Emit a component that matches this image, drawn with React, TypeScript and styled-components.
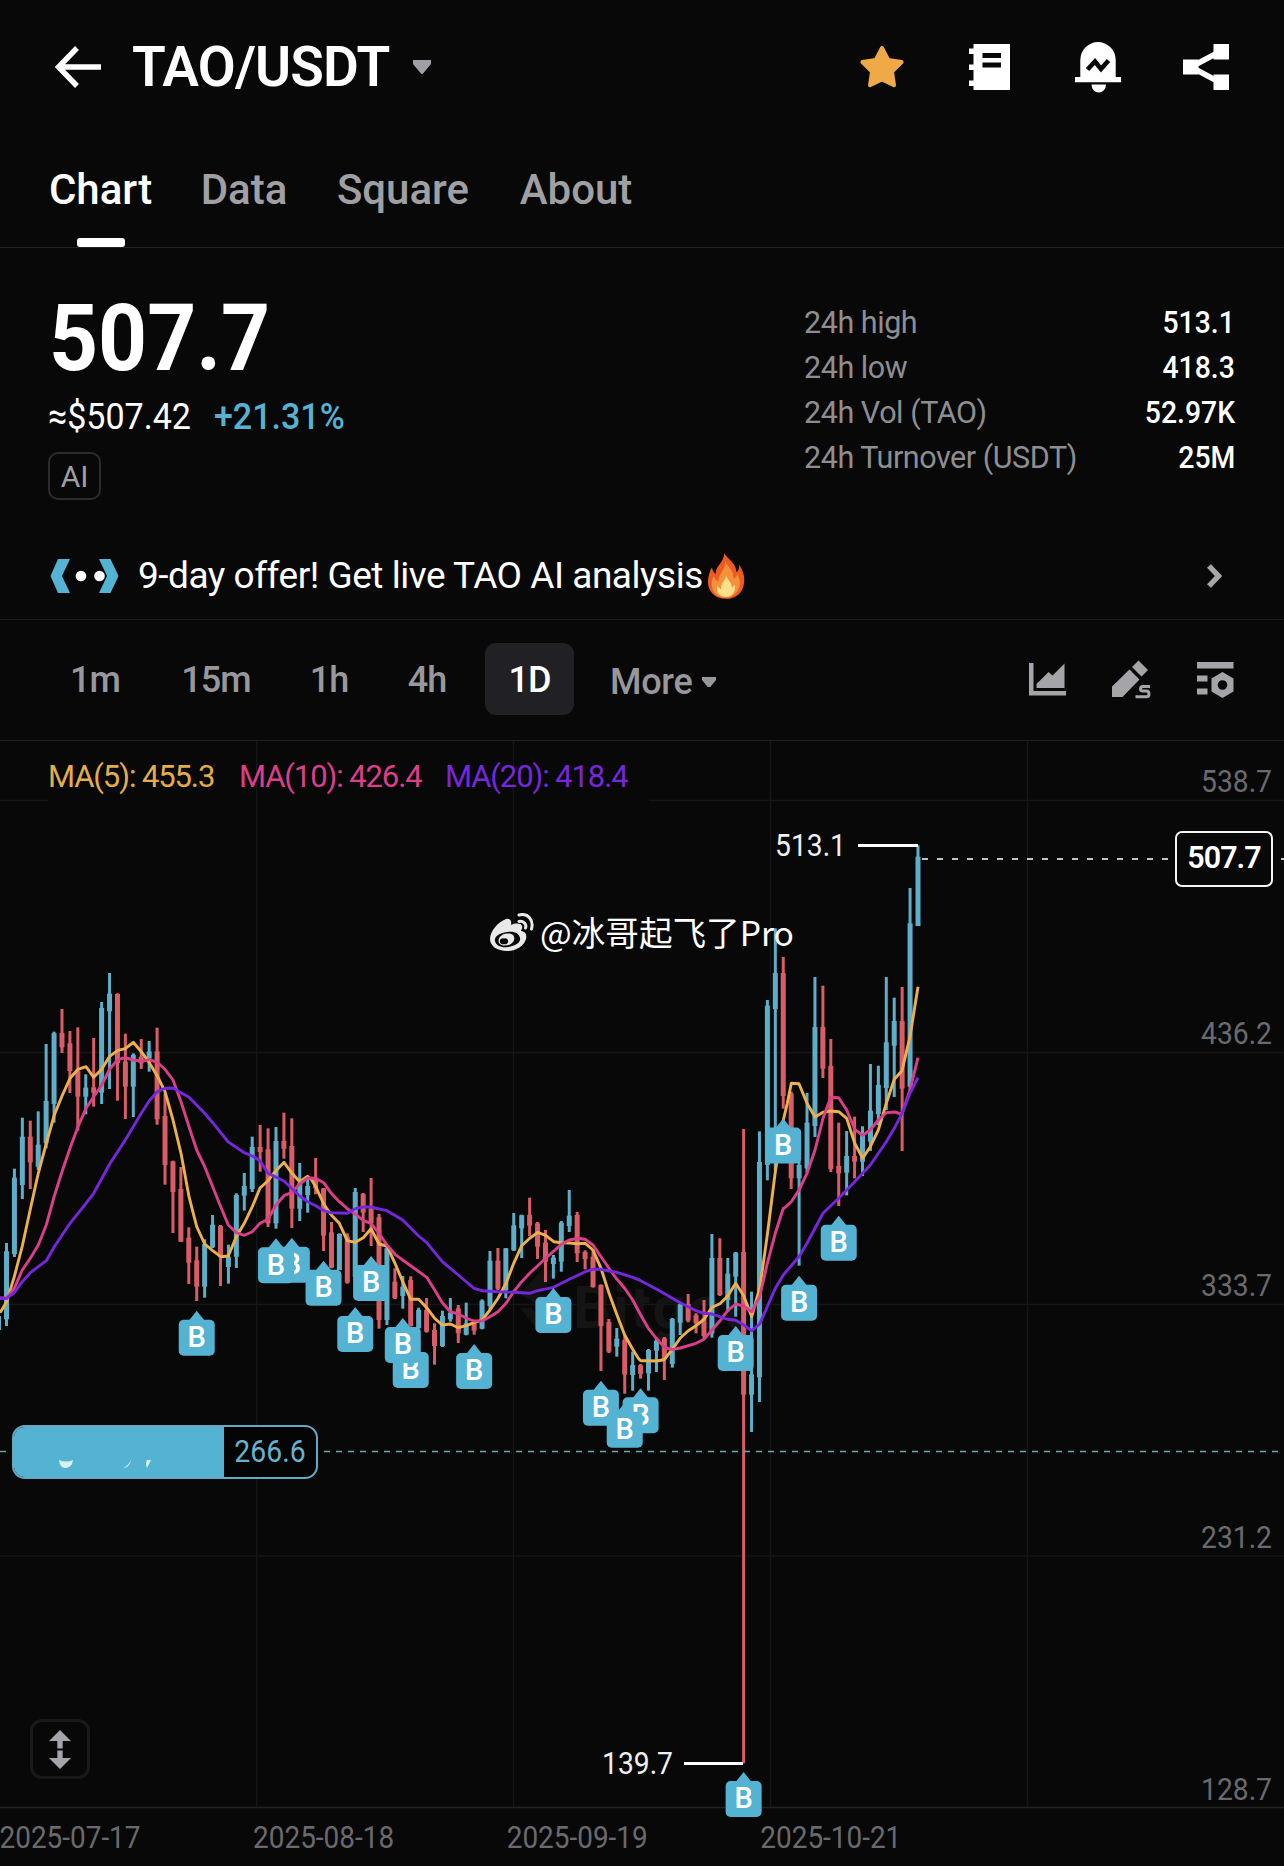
import React from "react";
import styled, { createGlobalStyle } from "styled-components";

const Global = createGlobalStyle`
  * { box-sizing: border-box; }
  html, body { margin: 0; background: #080808; }
  svg { display: block; flex: none; }
`;

const blue = "#54b3d3";
const muted = "#a0a0a4";

const Screen = styled.main`
  width: 1284px;
  height: 1866px;
  overflow: hidden;
  display: flex;
  flex-direction: column;
  background: #080808;
  color: #fff;
  font-family: Roboto, "Noto Sans CJK SC", sans-serif;
`;

const TopBar = styled.header`
  height: 134px;
  flex: none;
  display: flex;
  align-items: center;
  padding: 0 55px 0 55px;
`;
const Pair = styled.h1`
  margin: 0 24px 0 30px;
  width: 257px;
  font-size: 55px;
  line-height: 66px;
  font-weight: 600;
  letter-spacing: -0.8px;
  white-space: nowrap;
`;
const TopActions = styled.div`
  margin-left: auto;
  display: flex;
  align-items: center;
`;
const Action = styled.span<{ $gap?: number }>`
  margin-left: ${(p) => p.$gap ?? 0}px;
`;

const Tabs = styled.nav`
  height: 114px;
  flex: none;
  display: flex;
  padding-left: 49px;
  border-bottom: 1px solid #222224;
`;
const Tab = styled.a<{ $active?: boolean; $width: number; $gap?: number }>`
  width: ${(p) => p.$width}px;
  margin-right: ${(p) => p.$gap ?? 0}px;
  display: flex;
  flex-direction: column;
  align-items: center;
  justify-content: space-between;
  padding-top: 31px;
  font-size: 42px;
  line-height: 50px;
  font-weight: 500;
  white-space: nowrap;
  color: ${(p) => (p.$active ? "#fff" : muted)};
`;
const Underline = styled.span`
  width: 48px;
  height: 9px;
  border-radius: 3px;
  background: #fff;
`;

const Summary = styled.section`
  height: 300px;
  flex: none;
  display: flex;
  justify-content: space-between;
  padding: 0 49px 0 48px;
`;
const PriceColumn = styled.div`
  display: flex;
  flex-direction: column;
  align-items: flex-start;
`;
const Price = styled.div`
  margin-top: 40px;
  height: 107px;
  line-height: 102px;
  font-size: 93px;
  font-weight: 700;
  margin-left: 1px;
  transform: scaleX(0.92);
  transform-origin: left;
`;
const SubPrice = styled.div`
  display: flex;
  height: 44px;
  line-height: 44px;
  font-size: 37px;
  transform: scaleX(0.92);
  transform-origin: left;
`;
const Change = styled.span`
  margin-left: 25px;
  font-weight: 500;
  color: ${blue};
`;
const Tag = styled.span`
  margin-top: 13px;
  width: 53px;
  height: 48px;
  display: flex;
  align-items: center;
  justify-content: center;
  border: 2px solid #2c2c30;
  border-radius: 10px;
  font-size: 30px;
  color: ${muted};
`;
const Stats = styled.dl`
  margin: 52px 0 0;
  width: 431px;
  height: 181px;
  display: grid;
  grid-template-rows: repeat(4, 45px);
`;
const Stat = styled.div`
  display: flex;
  align-items: center;
  justify-content: space-between;
  font-size: 30.5px;
  dt { color: #8e8e92; letter-spacing: -0.45px; }
  dd { margin: 0; font-weight: 500; transform: scaleX(0.93); transform-origin: right; }
`;

const Offer = styled.section`
  height: 72px;
  flex: none;
  display: flex;
  align-items: center;
  padding: 0 62px 16px 50px;
  border-bottom: 1px solid #1c1c1e;
`;
const OfferText = styled.span`
  margin: 0 5px 0 19px;
  width: 564px;
  font-size: 37px;
  line-height: 54px;
  letter-spacing: -0.48px;
  white-space: nowrap;
`;
const Trailing = styled.span`
  margin-left: auto;
`;

const Intervals = styled.nav`
  height: 121px;
  flex: none;
  display: flex;
  align-items: center;
  padding: 0 50px 2px 49px;
  border-bottom: 1px solid #222224;
`;
const Interval = styled.button<{ $active?: boolean; $width: number; $gap?: number }>`
  width: ${(p) => p.$width}px;
  margin-left: ${(p) => p.$gap ?? 0}px;
  height: 72px;
  padding: 2px 0 0;
  border: 0;
  border-radius: 11px;
  font: 500 36px Roboto, sans-serif;
  letter-spacing: -0.9px;
  white-space: nowrap;
  background: ${(p) => (p.$active ? "#202025" : "transparent")};
  color: ${(p) => (p.$active ? "#fff" : "#98989c")};
`;
const More = styled.span`
  display: flex;
  align-items: center;
  gap: 10px;
  margin: 6px 0 0 36px;
  font-size: 36px;
  font-weight: 500;
  letter-spacing: -0.3px;
  color: #98989c;
`;
const Tools = styled.div`
  margin-left: auto;
  padding-top: 1px;
  display: flex;
  align-items: center;
  gap: 46px;
`;

const ChartPane = styled.section`
  position: relative;
  height: 1125px;
  flex: none;
  overflow: hidden;
`;
const Legend = styled.div`
  position: absolute;
  top: 18px;
  left: 48px;
  display: flex;
  gap: 23px;
  font-size: 31px;
  line-height: 36px;
`;
const LegendItem = styled.span<{ $color: string; $width: number }>`
  width: ${(p) => p.$width}px;
  letter-spacing: -1.1px;
  white-space: nowrap;
  color: ${(p) => p.$color};
`;
const CostTag = styled.div`
  position: absolute;
  left: 12px;
  top: 684px;
  width: 306px;
  height: 54px;
  display: flex;
  border: 2px solid #64aac4;
  border-radius: 13px;
  overflow: hidden;
  background: #050505;
`;
const CostLabel = styled.div`
  width: 211px;
  margin: -1px 0 -1px -1px;
  background: ${blue};
`;
const CostValue = styled.div`
  flex: 1;
  text-align: center;
  font-size: 30.5px;
  line-height: 50px;
  transform: scaleX(0.93);
  color: #68b2ce;
`;
const CurrentPrice = styled.div`
  position: absolute;
  left: 1175px;
  top: 90px;
  width: 98px;
  height: 56px;
  border: 2px solid #f4f4f4;
  border-radius: 7px;
  background: #080808;
  text-align: center;
  font-size: 30.5px;
  font-weight: 600;
  line-height: 50px;
  letter-spacing: -1px;
`;
const ScaleButton = styled.button`
  position: absolute;
  left: 30px;
  top: 978px;
  width: 60px;
  height: 60px;
  padding: 0;
  display: flex;
  align-items: center;
  justify-content: center;
  border: 3px solid #19191b;
  border-radius: 12px;
  background: transparent;
`;
const Author = styled.div`
  position: absolute;
  left: 490px;
  top: 166px;
  display: flex;
  align-items: center;
  gap: 6px;
  font: 400 33.6px/50px "Noto Sans CJK SC", sans-serif;
  white-space: nowrap;
`;
const AuthorName = styled.span`
  height: 50px;
`;

/* Bars are [direction, high, body top, body bottom, low] in steps of a third
   of a pixel, measured from the top of their own segment. */
type Bar = [string, number, number, number, number];
type Segment = { top: number; bars: Bar[] };
const segments: Segment[] = [
  {
    top: 940,
    bars: [
      ["u", 909, 934, 1138, 1158], ["u", 686, 713, 942, 951], ["u", 533, 590, 735, 777],
      ["d", 542, 590, 667, 747], ["u", 514, 614, 680, 690], ["u", 312, 483, 610, 625],
      ["u", 275, 280, 492, 548], ["d", 207, 279, 322, 339], ["d", 273, 310, 393, 459],
      ["d", 262, 393, 470, 572], ["u", 403, 443, 470, 523], ["d", 294, 442, 458, 500],
      ["u", 186, 204, 458, 492], ["u", 99, 161, 214, 447], ["d", 160, 162, 370, 482],
      ["d", 281, 365, 440, 537], ["u", 340, 345, 440, 531], ["d", 297, 350, 370, 387],
      ["u", 303, 334, 355, 395], ["d", 263, 334, 538, 554], ["d", 460, 528, 675, 734],
      ["d", 662, 664, 756, 879], ["d", 681, 747, 905, 906], ["d", 862, 893, 968, 1032],
      ["d", 920, 961, 1040, 1083], ["u", 898, 912, 1040, 1073], ["u", 825, 854, 922, 924],
      ["d", 855, 858, 952, 1038], ["u", 914, 950, 981, 1031], ["u", 760, 765, 950, 984],
      ["u", 699, 738, 767, 812], ["u", 590, 621, 747, 756], ["d", 555, 621, 636, 695],
      ["d", 565, 628, 850, 861], ["u", 561, 603, 850, 866], ["d", 518, 603, 626, 656],
      ["d", 535, 618, 806, 864], ["u", 669, 728, 806, 843], ["u", 715, 738, 765, 818],
      ["d", 654, 715, 745, 763], ["d", 744, 745, 887, 933], ["d", 846, 877, 983, 985],
      ["u", 880, 882, 990, 990], ["d", 880, 890, 1028, 1031], ["u", 744, 756, 1010, 1010],
      ["d", 759, 762, 818, 876], ["d", 714, 805, 850, 918], ["d", 822, 832, 1140, 1166],
      ["u", 920, 925, 1140, 1155], ["d", 985, 1025, 1075, 1077], ["u", 1008, 1040, 1068, 1106],
      ["d", 1009, 1020, 1158, 1160], ["u", 1103, 1110, 1165, 1165], ["d", 1074, 1110, 1175, 1178],
      ["d", 1150, 1170, 1218, 1274], ["u", 1112, 1128, 1218, 1221], ["u", 1074, 1118, 1138, 1145],
      ["d", 1095, 1105, 1180, 1209], ["u", 1088, 1150, 1184, 1186], ["d", 1140, 1150, 1172, 1184],
      ["u", 1078, 1082, 1166, 1168], ["u", 933, 962, 1098, 1110], ["d", 924, 962, 1046, 1050],
      ["u", 924, 925, 1050, 1075], ["u", 819, 856, 931, 933], ["u", 824, 826, 865, 954],
      ["d", 773, 825, 857, 888], ["d", 846, 850, 920, 957], ["d", 870, 908, 965, 1026],
      ["u", 945, 953, 972, 1016], ["u", 843, 848, 965, 995], ["u", 750, 827, 858, 876],
      ["d", 816, 825, 940, 966], ["d", 931, 936, 957, 988], ["d", 930, 950, 1041, 1043],
      ["d", 1033, 1035, 1158, 1293], ["d", 1137, 1146, 1235, 1239], ["u", 1164, 1196, 1220, 1250],
      ["d", 1185, 1200, 1304, 1361], ["u", 1235, 1275, 1305, 1352],
    ],
  },
  {
    top: 1100,
    bars: [
      ["d", 792, 796, 822, 836], ["u", 747, 750, 820, 872], ["u", 713, 722, 752, 816],
      ["d", 711, 715, 778, 840], ["u", 654, 657, 792, 803], ["u", 610, 613, 668, 705],
      ["d", 582, 612, 662, 667], ["d", 640, 646, 670, 700], ["d", 600, 655, 708, 715],
      ["u", 402, 474, 700, 713], ["d", 415, 474, 585, 588], ["u", 474, 521, 600, 635],
      ["u", 456, 458, 530, 650], ["d", 87, 456, 884, 1990], ["u", 575, 823, 884, 996],
      ["u", 94, 186, 832, 906],
    ],
  },
  {
    top: 820,
    bars: [
      ["u", 540, 557, 1035, 1081], ["u", 325, 459, 567, 1053], ["d", 411, 459, 828, 866],
      ["d", 815, 820, 1075, 1107], ["u", 980, 1035, 1075, 1337], ["u", 819, 908, 1045, 1058],
      ["u", 471, 621, 918, 951], ["d", 497, 621, 746, 774], ["d", 657, 738, 1047, 1056],
      ["d", 908, 1038, 1060, 1158], ["u", 933, 1008, 1058, 1126], ["d", 890, 1008, 1025, 1075],
      ["u", 919, 940, 1025, 1068], ["u", 732, 872, 965, 993], ["u", 737, 795, 882, 915],
      ["u", 471, 667, 804, 870], ["u", 533, 603, 677, 831], ["d", 501, 603, 806, 993],
      ["u", 204, 310, 800, 810], ["u", 76, 110, 318, 318],
    ],
  },
];
const barX = (i: number) => 6.5 + i * 7.926;
const candles = segments
  .flatMap((s) => s.bars.map(([dir, ...v]) => ({ dir, v: v.map((n) => s.top + n / 3) })))
  .map((c, i) => ({ ...c, x: barX(i) }));

/* Average curves use the same third-pixel steps; every piece has its own origin. */
const origins = [[0, 940], [310, 940], [560, 1100], [640, 820]];
const curve = (pieces: string[]) =>
  pieces
    .flatMap((piece, k) =>
      piece.split(" ").map((pt) => {
        const [x, y] = pt.split(",").map(Number);
        return `${(origins[k][0] + x / 3).toFixed(1)},${(origins[k][1] + y / 3).toFixed(1)}`;
      })
    )
    .join(" ");

const ma5 = curve([
  "0,1118 20,1085 43,1010 67,918 91,808 115,700 139,610 163,525 186,468 210,415 234,388 258,380 281,412 305,388 329,349 353,331 376,326 400,307 424,335 448,368 472,408 495,455 519,540 543,640 567,770 590,860 614,912 638,932 662,950 685,948 709,890 733,850 757,800 780,744 804,722 828,692 852,667 876,700 899,725 923,709",
  "5,720 17,740 41,792 64,825 88,850 112,902 136,907 160,893 183,866 207,912 231,918 255,970 278,1025 302,1078 326,1078 350,1103 374,1135 397,1155 421,1152 445,1163 469,1157 492,1148 516,1140 540,1110 564,1075 588,1030 611,970 635,917 659,895 683,877 707,886 731,905 754,908 778,909 802,911 826,910 849,930 873,985 897,1060 921,1125 944,1185 968,1228 985,1255",
  "242,782 265,782 289,783 313,779 337,748 361,714 385,692 408,677 432,658 456,622 480,611 503,588 527,550 551,587 575,650 600,560 622,405 646,215 670,60",
  "430,900 442,850 454,790 477,791 501,850 525,891 549,877 572,873 596,875 620,895 644,970 668,1015 691,980 715,930 739,850 763,778 786,752 810,650 834,500",
]);
const ma10 = curve([
  "0,1074 20,1074 43,1045 67,990 91,955 115,915 139,855 163,768 186,695 210,625 234,560 258,505 281,470 305,435 329,387 353,359 376,353 400,360 424,364 448,359 472,367 495,388 519,420 543,485 567,560 590,630 614,680 638,740 662,800 685,855 709,878 733,886 757,875 780,850 804,838 828,795 852,767 876,757 899,732 923,714",
  "17,715 41,728 64,760 88,785 112,806 136,822 160,842 183,850 207,880 231,915 255,943 278,960 302,977 350,1012 374,1050 397,1088 421,1115 445,1122 469,1135 492,1143 516,1143 540,1130 564,1115 588,1090 611,1055 635,1025 659,1000 707,955 754,913 778,900 802,895 826,898 849,915 873,950 897,985 921,1018",
  "194,565 218,600 242,645 265,685 289,715 313,742 337,749 361,744 408,730 432,718 456,690 480,662 503,632 527,612 551,618 575,635 599,590 622,490 646,400 670,325",
  "430,1167 454,1145 477,1110 501,1060 525,990 549,895 572,832 596,833 620,870 644,928 668,946 691,930 715,900 739,878 763,876 786,882 810,810 834,713",
]);
const ma20 = curve([
  "0,1076 20,1075 43,1058 67,1025 91,998 115,980 139,962 163,920 210,850 258,790 281,760 329,672 376,600 424,520 448,482 472,455 495,445 519,444 543,458 567,472 614,520 638,548 685,606 733,638 757,648 780,662 804,700 852,723 899,768 923,785",
  "17,797 41,812 64,818 112,820 136,806 160,801 183,801 207,807 231,812 278,840 326,888 350,908 397,965 445,1005 492,1045 516,1052 564,1055 611,1057 659,1060 683,1052 731,1042 778,1018 826,995 849,988 873,988 897,993 921,997 968,1012",
  "242,542 289,567 361,608 408,632 432,640 456,642 503,658 527,661 551,675 575,692 599,672 622,620 646,565 670,525",
  "430,1365 477,1310 501,1270 549,1180 596,1135 644,1085 691,1035 739,965 763,925 786,880 810,820 834,773",
]);

const buys: [number, number][] = [
  [24, 1310.7], [36, 1237.7], [34, 1238.3], [40, 1260.7], [44, 1307], [46, 1256],
  [51, 1343], [50, 1318], [59, 1344], [69, 1288], [75, 1380.7], [80, 1388.3],
  [78, 1402.7], [92, 1326], [98, 1118.5], [100, 1275.7], [105, 1215.7], [93, 1772],
];

const priceLabels = ["538.7", "436.2", "333.7", "231.2", "128.7"];
const dateLabels = ["2025-07-17", "2025-08-18", "2025-09-19", "2025-10-21"];

const AxisText = styled.text`
  font: 400 30.5px Roboto, sans-serif;
  fill: #6a6a6e;
`;
const PeakText = styled.text`
  font: 400 30.5px Roboto, sans-serif;
  fill: #f0f0f0;
`;
const BuyText = styled.text`
  font: 500 29px Roboto, sans-serif;
  fill: #fff;
  text-anchor: middle;
`;
const BrandText = styled.text`
  font: 700 60px Roboto, sans-serif;
  fill: #141415;
`;

function PriceChart() {
  return (
    <svg width="1284" height="1125" viewBox="0 741 1284 1125">
      <g stroke="#161618" strokeWidth="1.4">
        {[256.7, 513.5, 770.5, 1027.5].map((x) => (
          <line key={x} x1={x} x2={x} y1="741" y2="1807" />
        ))}
        <line x1="0" x2="48" y1="800.5" y2="800.5" />
        <line x1="649" x2="1284" y1="800.5" y2="800.5" />
        {[1052.5, 1304.5, 1556].map((y) => (
          <line key={y} x1="0" x2="1284" y1={y} y2={y} />
        ))}
        <line x1="0" x2="1284" y1="1807.5" y2="1807.5" stroke="#222224" />
      </g>
      <path d="M520 1294 L542 1270 H560 L540 1294 H552 L540 1306 M520 1308 L536 1328 H548 L532 1308 Z" fill="#121213" />
      <BrandText x="573" y="1328" textLength="170">Bitget</BrandText>

      {candles.map(({ dir, v, x }, i) => (
        <g key={i} fill={dir === "u" ? "#5eaeca" : "#d95d66"}>
          <rect x={x - 1.5} y={v[0]} width="3" height={v[3] - v[0]} />
          <rect x={x - 2.5} y={v[1]} width="5" height={v[2] - v[1]} />
        </g>
      ))}
      <rect x="0" y="1316" width="1" height="14" fill="#5eaeca" />

      <g fill="none" strokeWidth="2.9" strokeLinejoin="round">
        <polyline points={ma5} stroke="#edb04e" />
        <polyline points={ma10} stroke="#da3f8a" />
        <polyline points={ma20} stroke="#7627dc" />
      </g>

      <line x1="922" x2="1172" y1="859" y2="859" stroke="#fff" strokeWidth="1.6" strokeDasharray="6 9" />
      <line x1="1281" x2="1284" y1="859" y2="859" stroke="#fff" strokeWidth="1.6" />
      <line x1="324" x2="1284" y1="1451.5" y2="1451.5" stroke="#67aab5" strokeWidth="1.4" strokeDasharray="6 6" />
      <line x1="0" x2="6" y1="1451.5" y2="1451.5" stroke="#67aab5" strokeWidth="1.4" />

      <path d="M858 845.5 H918 M684 1763.5 H743" stroke="#fff" strokeWidth="2.8" />
      <PeakText x="775" y="856" textLength="71" lengthAdjust="spacingAndGlyphs">513.1</PeakText>
      <PeakText x="602" y="1774" textLength="71" lengthAdjust="spacingAndGlyphs">139.7</PeakText>

      {buys.map(([i, y]) => (
        <g key={i} transform={`translate(${barX(i)} ${y})`}>
          <path d="M0 0 L8 10 H-8 Z" fill={blue} />
          <rect x="-18" y="9" width="36" height="36" rx="5" fill={blue} />
          <BuyText x="0" y="36.3">B</BuyText>
        </g>
      ))}

      {priceLabels.map((label, i) => (
        <AxisText key={label} x="1201" y={792.3 + i * 252} textLength="71" lengthAdjust="spacingAndGlyphs">{label}</AxisText>
      ))}
      {dateLabels.map((label, i) => (
        <AxisText key={label} x={i * 253.6 - 0.5} y="1848" textLength="141" lengthAdjust="spacingAndGlyphs">{label}</AxisText>
      ))}
    </svg>
  );
}

const BackIcon = () => (
  <svg width="47" height="42" viewBox="0 0 47 42" fill="none" stroke="#fff" strokeWidth="5.4">
    <path d="M22 2 L3.5 21 L22 40 M4 21 H46" />
  </svg>
);
const Caret = ({ size, color }: { size: number; color: string }) => (
  <svg width={size} height={size * 0.78} viewBox="0 0 18 14" fill={color}>
    <path d="M0 0 H18 V4 L10.5 13 Q9 15 7.5 13 L0 4 Z" />
  </svg>
);
const StarIcon = () => (
  <svg width="46" height="44" viewBox="0 0 46 44">
    <path
      d="M23 3 L29.2 15 L42.6 17 L33 26.7 L35 40.2 L23 34.5 L11 40.2 L13 26.7 L3.4 17 L16.8 15 Z"
      fill="#efa947" stroke="#efa947" strokeWidth="4" strokeLinejoin="round"
    />
  </svg>
);
const NotebookIcon = () => (
  <svg width="41" height="46" viewBox="0 0 41 46">
    <path d="M4.5 0 H41 V46 H4.5 V42 H0 V36.500 H4.500 V26 H0 V20.500 H4.500 V10 H0 V4.500 H4.500 Z" fill="#fff" />
    <path d="M13.500 9 H32 V14 H13.500 Z M13.500 18.500 H32 V23.500 H13.500 Z" fill="#080808" />
  </svg>
);
const BellIcon = () => (
  <svg width="46" height="51" viewBox="0 0 46 51">
    <path d="M5.300 35 V18 A17.700 18 0 0 1 40.700 18 V35 H46 V40.300 H0 V35 Z M16.500 42.500 H31 A7.250 8 0 0 1 16.500 42.500 Z" fill="#fff" />
    <path d="M12.500 27.500 L20 19.500 L26 27 L33.500 18.500" fill="none" stroke="#080808" strokeWidth="4.600" />
  </svg>
);
const ShareIcon = () => (
  <svg width="46" height="46" viewBox="0 0 46 46">
    <path d="M8 23 L38 7 M8 23 L38 39" stroke="#fff" strokeWidth="5.500" />
    <path d="M0 15.500 H15.500 V30.500 H0 Z M30.500 0 H46 V15.500 H30.500 Z M30.500 30.500 H46 V46 H30.500 Z" fill="#fff" />
  </svg>
);
const RobotIcon = () => (
  <svg width="69" height="34" viewBox="0 0 69 34">
    <path d="M8 0 H20 L12 17 L20 34 H8 L0.500 17 Z M49 0 H60.500 L68.500 17 L60.500 34 H49 L57 17 Z" fill={blue} />
    <circle cx="31" cy="17" r="5.300" fill="#fff" />
    <circle cx="49.500" cy="17" r="5.300" fill="#fff" />
  </svg>
);
const FlameIcon = () => (
  <svg width="38" height="46" viewBox="0 0 40 48">
    <path d="M18 0 C22 6 31 11 31 20 C34 18 34 15 34 12 C38 19 40 25 39 31 C38 42 30 48 20 48 C8 48 1 40 1 30 C1 24 3 19 5 15 C6 18 7 20 9 22 C9 13 18 10 18 0 Z" fill="#ee5a24" />
    <path d="M19 8 C22 15 28 17 28 27 C31 26 31 24 32 22 C36 29 35 37 31 41 C28 45 24 47 20 47 C11 47 5 41 5 33 C5 29 6 26 7 24 C8 27 10 29 12 30 C12 21 20 18 19 8 Z" fill="#f6913b" />
    <path d="M20 23 C21 28 26 30 26 36 C28 35 28 34 29 33 C31 41 26 46 20 46 C13 46 9 41 11 34 C12 36 13 37 15 38 C14 31 20 29 20 23 Z" fill="#ffe08a" />
  </svg>
);
const ChevronIcon = () => (
  <svg width="15" height="24" viewBox="0 0 15 24" fill="none" stroke="#a6a6a6" strokeWidth="5.4">
    <path d="M2 2 L11.500 12 L2 22" />
  </svg>
);
const AreaIcon = () => (
  <svg width="37" height="33" viewBox="0 0 37 33" fill="#a4a4a9">
    <path d="M0 0 H4.500 V28 H37 V32.500 H0 Z M7.500 21 L19.500 9 L23.500 12.500 L35.500 0.500 V25 H7.500 Z" />
  </svg>
);
const PencilIcon = () => (
  <svg width="39" height="40" viewBox="0 0 39 40" fill="#a4a4a9">
    <path d="M0 37 V26.500 L17.500 9.500 L27.500 19.500 L10.500 37 Z M20 7 L26.500 0.500 L36 10 L29.500 16.500 Z" />
    <path d="M38 26.500 H31 Q28.500 26.500 28.500 29 Q28.500 31 31 31 H34.500 Q37 31 37 34 Q37 36.800 34.500 36.800 H23.500" fill="none" stroke="#a4a4a9" strokeWidth="3" />
  </svg>
);
const SettingsIcon = () => (
  <svg width="37" height="36" viewBox="0 0 37 36" fill="#a4a4a9">
    <path d="M0 0 H36.500 V6.500 H0 Z M0 13.500 H10.500 V19.500 H0 Z M0 26.500 H10.500 V32.500 H0 Z" />
    <path fillRule="evenodd" d="M25.500 10 L36.500 16.500 V29.500 L25.500 36 L14.500 29.500 V16.500 Z M25.500 18.200 A4.800 4.800 0 1 0 25.500 27.800 A4.800 4.800 0 1 0 25.500 18.200 Z" />
  </svg>
);
const StretchIcon = () => (
  <svg width="22" height="39" viewBox="0 0 22 39" fill="#a4a4aa">
    <path d="M11 0 L22 11 H13.700 V18.500 H8.300 V11 H0 Z M8.300 20.500 H13.700 V28 H22 L11 39 L0 28 H8.300 Z" />
  </svg>
);
const EyeIcon = () => (
  <svg width="44" height="38" viewBox="0 0 44 38" fill="#e9e9e9">
    <path fillRule="evenodd" d="M16 6 C20 5 22 8 21 12 C26 10 31 10 32 13 C33 15 31 17 31 18 C36 19 37 22 36 26 C34 33 26 38 17 38 C7 38 0 33 0 26 C0 18 8 9 16 6 Z M17 19 C9 20 4 24 5 28 C6 33 12 35 18 34 C26 33 31 29 30 25 C29 20 24 18 17 19 Z" />
    <path fillRule="evenodd" d="M17 20.500 C24 19.500 26 25 23 29 C20 33 12 34 9 30 C7 26 11 21 17 20.500 Z M14 25.500 A3 3 0 1 0 14 31 A3 3 0 1 0 14 25.500 Z" />
    <path d="M29 2 C38 -0.500 44 7 41.500 16 M29 8.500 C33 7.500 37 11 35.500 15" fill="none" stroke="#e9e9e9" strokeWidth="3" strokeLinecap="round" />
  </svg>
);
const SmudgeMarks = () => (
  <svg width="211" height="52" viewBox="0 0 211 52" fill="#d9f0f3">
    <path d="M46 34 Q53 37 60 34 Q59 42 52 42 Q47 42 46 34 Z M118 34 Q117 41 110 42 Q116 39 118 34 Z M134 34 L138 34 L134 42 Q132 38 134 34 Z" />
  </svg>
);

const stats = [
  ["24h high", "513.1"],
  ["24h low", "418.3"],
  ["24h Vol (TAO)", "52.97K"],
  ["24h Turnover (USDT)", "25M"],
];

export default function App() {
  return (
    <Screen>
      <Global />
      <TopBar>
        <BackIcon />
        <Pair>TAO/USDT</Pair>
        <Caret size={18} color={muted} />
        <TopActions>
          <Action><StarIcon /></Action>
          <Action $gap={64}><NotebookIcon /></Action>
          <Action $gap={65}><BellIcon /></Action>
          <Action $gap={62}><ShareIcon /></Action>
        </TopActions>
      </TopBar>

      <Tabs>
        <Tab $active $width={103} $gap={49}>Chart<Underline /></Tab>
        <Tab $width={86} $gap={50}>Data</Tab>
        <Tab $width={132} $gap={51}>Square</Tab>
        <Tab $width={112}>About</Tab>
      </Tabs>

      <Summary>
        <PriceColumn>
          <Price>507.7</Price>
          <SubPrice>≈$507.42<Change>+21.31%</Change></SubPrice>
          <Tag>AI</Tag>
        </PriceColumn>
        <Stats>
          {stats.map(([name, value]) => (
            <Stat key={name}><dt>{name}</dt><dd>{value}</dd></Stat>
          ))}
        </Stats>
      </Summary>

      <Offer>
        <RobotIcon />
        <OfferText>9-day offer! Get live TAO AI analysis</OfferText>
        <FlameIcon />
        <Trailing><ChevronIcon /></Trailing>
      </Offer>

      <Intervals>
        <Interval $width={92}>1m</Interval>
        <Interval $width={110} $gap={20}>15m</Interval>
        <Interval $width={82} $gap={17}>1h</Interval>
        <Interval $width={82} $gap={16}>4h</Interval>
        <Interval $width={89} $gap={17} $active>1D</Interval>
        <More>More<Caret size={14} color="#98989c" /></More>
        <Tools><AreaIcon /><PencilIcon /><SettingsIcon /></Tools>
      </Intervals>

      <ChartPane>
        <PriceChart />
        <Legend>
          <LegendItem $color="#e3ad4c" $width={168}>MA(5): 455.3</LegendItem>
          <LegendItem $color="#da3f8a" $width={183}>MA(10): 426.4</LegendItem>
          <LegendItem $color="#7627dc" $width={183}>MA(20): 418.4</LegendItem>
        </Legend>
        <CurrentPrice>507.7</CurrentPrice>
        <CostTag>
          <CostLabel><SmudgeMarks /></CostLabel>
          <CostValue>266.6</CostValue>
        </CostTag>
        <Author><EyeIcon /><AuthorName>@冰哥起飞了Pro</AuthorName></Author>
        <ScaleButton><StretchIcon /></ScaleButton>
      </ChartPane>
    </Screen>
  );
}
